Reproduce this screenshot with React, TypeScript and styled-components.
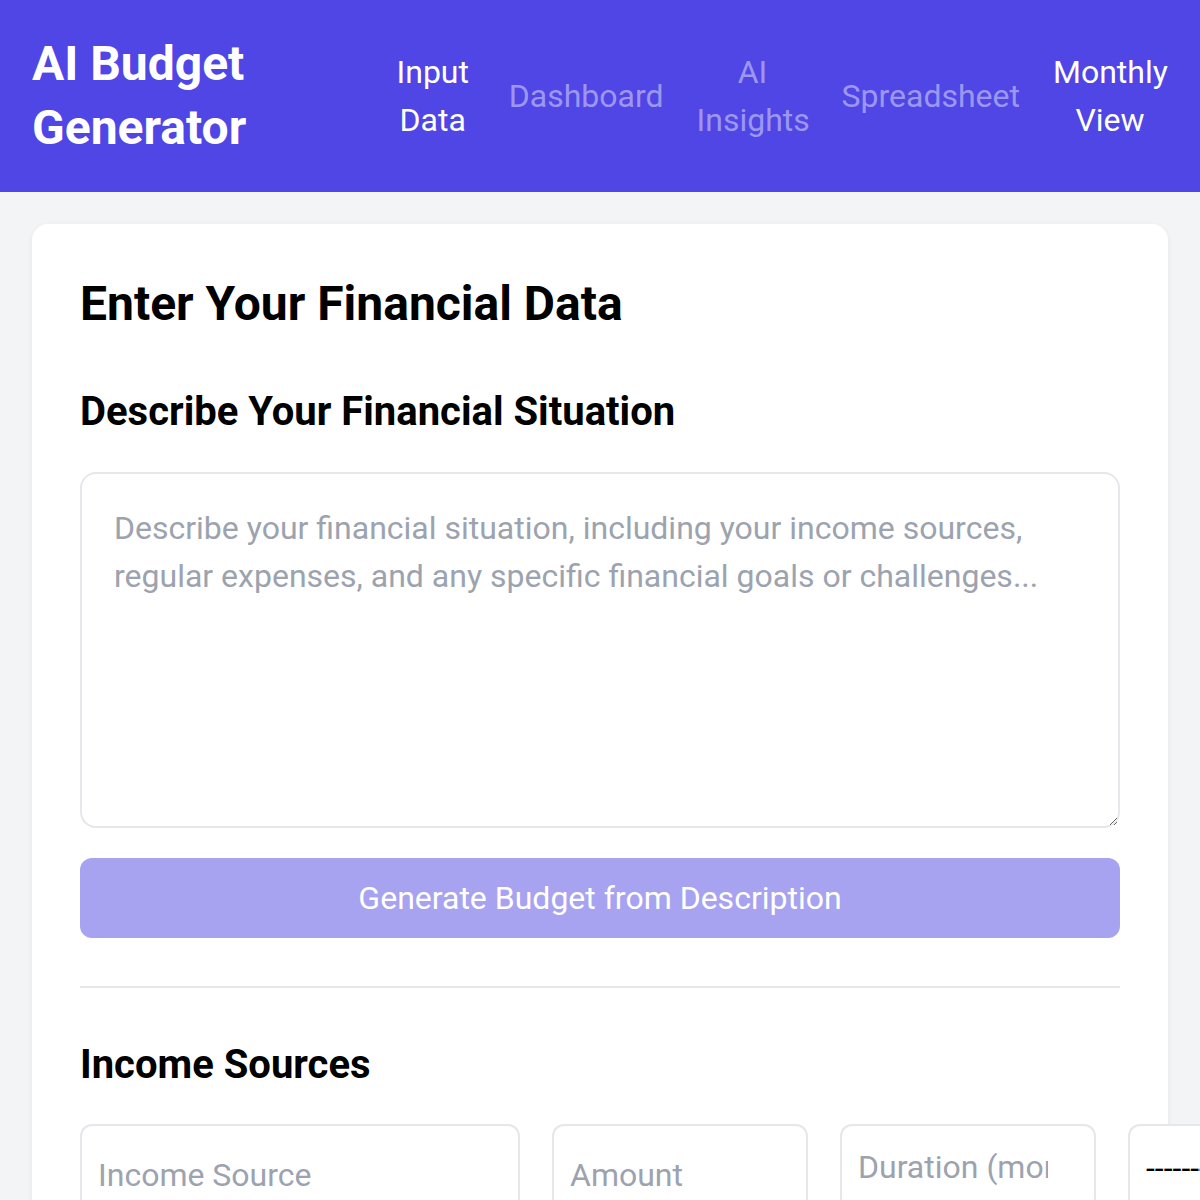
import React from "react";
import styled, { createGlobalStyle } from "styled-components";

const Global = createGlobalStyle`
  html, body { margin: 0; padding: 0; overflow-x: hidden; scrollbar-width: none; }
  html::-webkit-scrollbar, body::-webkit-scrollbar { display: none; }
  body { background: #f3f4f6; font-family: Roboto, "Liberation Sans", Arial, sans-serif; color: #000; }
  * { box-sizing: border-box; }
`;

const Header = styled.header`
  background: #4f46e5;
  height: 192px;
  display: flex;
  align-items: center;
  justify-content: space-between;
  padding: 0 16.5px 0 32px;
`;

const Brand = styled.h1`
  margin: 0;
  max-width: 240px;
  font-size: 48px;
  line-height: 64px;
  font-weight: 700;
  color: #fff;
`;

const Nav = styled.nav`
  display: flex;
  align-items: center;
`;

const NavItem = styled.div<{ $active?: boolean; $w?: number }>`
  padding: 0 16.5px;
  font-size: 32px;
  line-height: 48px;
  text-align: center;
  box-sizing: content-box;
  width: ${(p) => (p.$w ? `${p.$w}px` : "auto")};
  color: ${(p) => (p.$active ? "#ffffff" : "rgba(255,255,255,0.45)")};
  cursor: pointer;
`;

const Main = styled.main`
  padding: 32px;
`;

const Card = styled.section`
  background: #fff;
  border-radius: 16px;
  box-shadow: 0 2px 6px rgba(0, 0, 0, 0.06);
  padding: 48px;
`;

const Title = styled.h2`
  margin: 0 0 48px;
  font-size: 48px;
  line-height: 64px;
  font-weight: 700;
`;

const Subtitle = styled.h3<{ $mb?: number }>`
  margin: 0 0 ${(p) => p.$mb ?? 32}px;
  font-size: 40px;
  line-height: 56px;
  font-weight: 700;
`;

const TextArea = styled.textarea`
  display: block;
  width: 100%;
  height: 356px;
  border: 2px solid #e5e7eb;
  border-radius: 16px;
  padding: 30px 32px;
  font-family: inherit;
  font-size: 32px;
  line-height: 48px;
  color: #111827;
  outline: none;
  &::placeholder { color: #9ca3af; }
`;

const Button = styled.button`
  display: block;
  width: 100%;
  height: 80px;
  margin-top: 30px;
  border: none;
  border-radius: 12px;
  background: #a7a3f0;
  color: #fff;
  font-family: inherit;
  font-size: 32px;
  line-height: 48px;
`;

const Divider = styled.hr`
  border: none;
  border-top: 2px solid #e5e7eb;
  margin: 48px 0 49px;
`;

const Row = styled.div`
  display: flex;
  align-items: flex-start;
  gap: 32px;
  width: max-content;
`;

const Field = styled.input<{ $w: number; $h: number; $pr?: number }>`
  flex: none;
  width: ${(p) => p.$w}px;
  height: ${(p) => p.$h}px;
  border: 2px solid #e5e7eb;
  border-radius: 12px;
  padding: 0 ${(p) => p.$pr ?? 16}px 0 16px;
  font-family: inherit;
  font-size: 32px;
  line-height: 48px;
  color: #111827;
  outline: none;
  &::placeholder { color: #9ca3af; }
`;

const Select = styled.select<{ $w: number }>`
  flex: none;
  width: ${(p) => p.$w}px;
  height: 88px;
  border: 2px solid #e5e7eb;
  border-radius: 12px;
  padding: 0 16px;
  font-family: inherit;
  font-size: 32px;
  color: #000;
  background: #fff;
  appearance: none;
`;

export default function App() {
  return (
    <>
      <Global />
      <Header>
        <Brand>AI Budget Generator</Brand>
        <Nav>
          <NavItem $active $w={86}>Input Data</NavItem>
          <NavItem>Dashboard</NavItem>
          <NavItem $w={112}>AI Insights</NavItem>
          <NavItem>Spreadsheet</NavItem>
          <NavItem $active $w={114}>Monthly View</NavItem>
        </Nav>
      </Header>
      <Main>
        <Card>
          <Title>Enter Your Financial Data</Title>
          <Subtitle>Describe Your Financial Situation</Subtitle>
          <TextArea placeholder="Describe your financial situation, including your income sources, regular expenses, and any specific financial goals or challenges..." />
          <Button>Generate Budget from Description</Button>
          <Divider />
          <Subtitle $mb={31}>Income Sources</Subtitle>
          <Row>
            <Field $w={440} $h={102} placeholder="Income Source" />
            <Field $w={256} $h={102} placeholder="Amount" />
            <Field $w={256} $h={86} $pr={46} placeholder="Duration (months)" />
            <Select $w={256} defaultValue="none">
              <option value="none">--------</option>
              <option value="monthly">Monthly</option>
            </Select>
          </Row>
        </Card>
      </Main>
    </>
  );
}
